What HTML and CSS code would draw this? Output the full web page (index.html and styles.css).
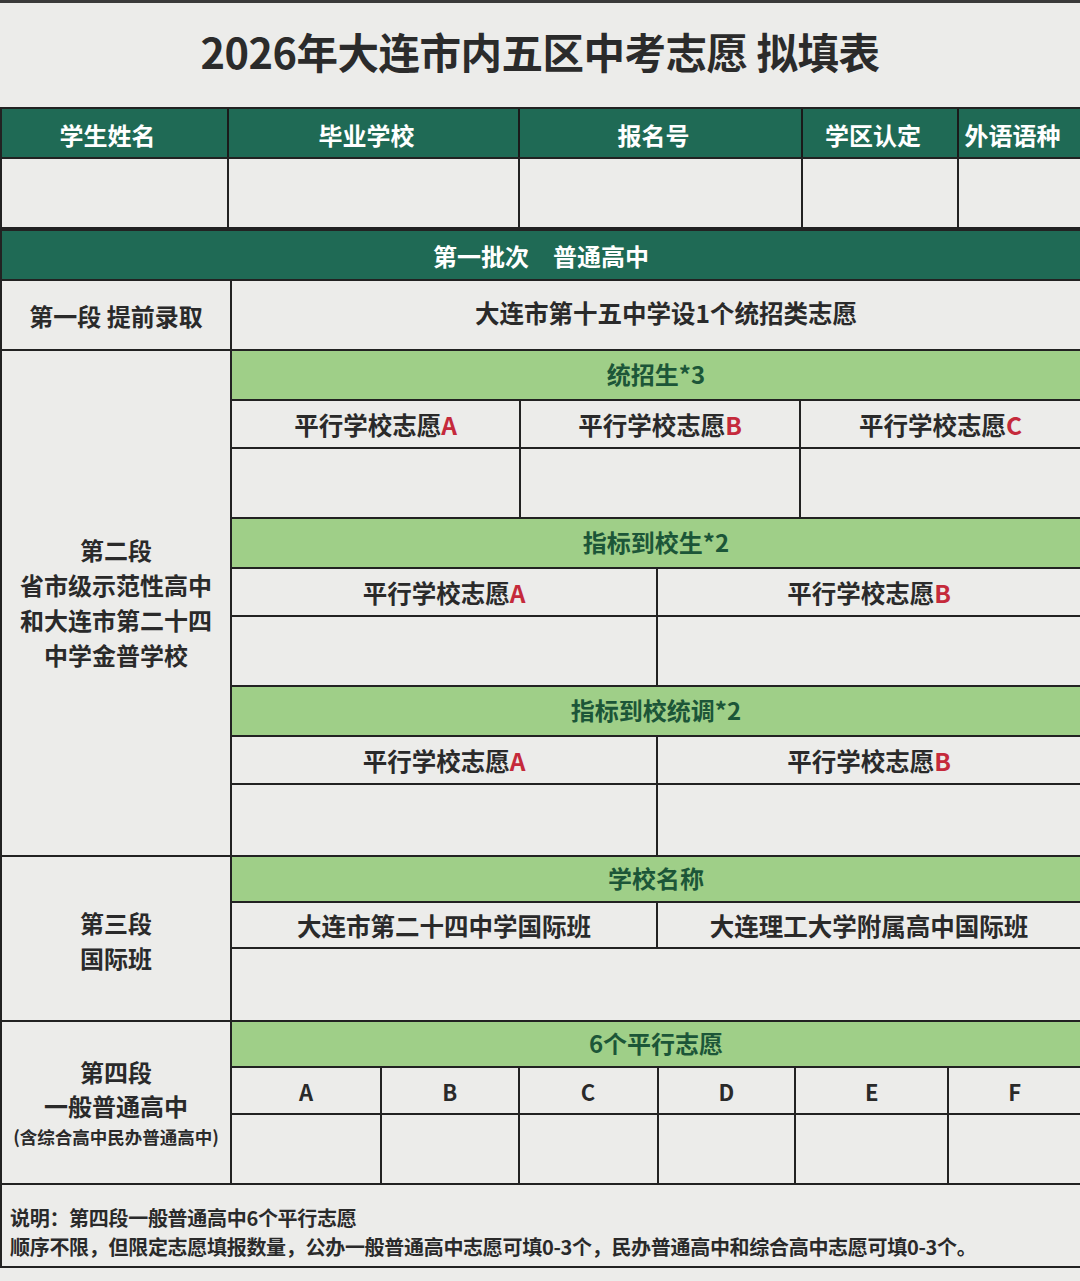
FILE: index.html
```html
<!DOCTYPE html>
<html lang="zh">
<head>
<meta charset="utf-8">
<title>2026年大连市内五区中考志愿 拟填表</title>
<link rel="stylesheet" href="styles.css">
</head>
<body>
<div class="page">
  <div class="title">2026年大连市内五区中考志愿 拟填表</div>
  <div class="form">
    <div class="row cols5 head dark">
      <div class="cell">学生姓名</div>
      <div class="cell">毕业学校</div>
      <div class="cell">报名号</div>
      <div class="cell">学区认定</div>
      <div class="cell">外语语种</div>
    </div>
    <div class="row cols5 blank">
      <div class="cell"></div>
      <div class="cell"></div>
      <div class="cell"></div>
      <div class="cell"></div>
      <div class="cell"></div>
    </div>
    <div class="row batch dark">第一批次　普通高中</div>

    <div class="seg seg1">
      <div class="label">第一段 提前录取</div>
      <div class="body one">大连市第十五中学设1个统招类志愿</div>
    </div>

    <div class="seg seg2">
      <div class="label">第二段<br>省市级示范性高中<br>和大连市第二十四<br>中学金普学校</div>
      <div class="body">
        <div class="band">统招生*3</div>
        <div class="row cols3 sub">
          <div class="cell">平行学校志愿<span class="red">A</span></div>
          <div class="cell">平行学校志愿<span class="red">B</span></div>
          <div class="cell">平行学校志愿<span class="red">C</span></div>
        </div>
        <div class="row cols3 blank">
          <div class="cell"></div><div class="cell"></div><div class="cell"></div>
        </div>
        <div class="band">指标到校生*2</div>
        <div class="row cols2 sub">
          <div class="cell">平行学校志愿<span class="red">A</span></div>
          <div class="cell">平行学校志愿<span class="red">B</span></div>
        </div>
        <div class="row cols2 blank">
          <div class="cell"></div><div class="cell"></div>
        </div>
        <div class="band">指标到校统调*2</div>
        <div class="row cols2 sub">
          <div class="cell">平行学校志愿<span class="red">A</span></div>
          <div class="cell">平行学校志愿<span class="red">B</span></div>
        </div>
        <div class="row cols2 blank last">
          <div class="cell"></div><div class="cell"></div>
        </div>
      </div>
    </div>

    <div class="seg seg3">
      <div class="label">第三段<br>国际班</div>
      <div class="body">
        <div class="band short">学校名称</div>
        <div class="row cols2 sub short">
          <div class="cell">大连市第二十四中学国际班</div>
          <div class="cell">大连理工大学附属高中国际班</div>
        </div>
        <div class="row blank wide last"></div>
      </div>
    </div>

    <div class="seg seg4">
      <div class="label">第四段<br>一般普通高中<br><span class="small">(含综合高中民办普通高中)</span></div>
      <div class="body">
        <div class="band short">6个平行志愿</div>
        <div class="row cols6 sub letters">
          <div class="cell">A</div>
          <div class="cell">B</div>
          <div class="cell">C</div>
          <div class="cell">D</div>
          <div class="cell">E</div>
          <div class="cell">F</div>
        </div>
        <div class="row cols6 blank low last">
          <div class="cell"></div><div class="cell"></div><div class="cell"></div>
          <div class="cell"></div><div class="cell"></div><div class="cell"></div>
        </div>
      </div>
    </div>

    <div class="note">
      <p>说明：第四段一般普通高中6个平行志愿</p>
      <p>顺序不限，但限定志愿填报数量，公办一般普通高中志愿可填0-3个，民办普通高中和综合高中志愿可填0-3个。</p>
    </div>
  </div>
</div>
</body>
</html>
```

FILE: styles.css
```css
* { box-sizing: border-box; }
html, body { margin: 0; padding: 0; }
body {
  background: #e4e4e2;
  font-family: "Noto Sans CJK SC", "Noto Sans", sans-serif;
  color: #2a2a2a;
}
.page {
  width: 1080px;
  height: 1281px;
  background: #ececea;
  border-top: 3px solid #3a3a3a;
  overflow: hidden;
}
.title {
  height: 104px;
  display: flex;
  align-items: center;
  justify-content: center;
  font-size: 41.5px;
  font-weight: 700;
  letter-spacing: -0.5px;
  color: #2b2b2b;
  padding-bottom: 8px;
}
.form {
  border-left: 2px solid #222;
  border-top: 2px solid #222;
}
.row {
  display: grid;
  border-bottom: 2px solid #222;
}
.cell {
  display: flex;
  align-items: center;
  justify-content: center;
  font-size: 24px;
  font-weight: 700;
  border-left: 2px solid #222;
}
.cell:first-child { border-left: none; }
.cols5 { grid-template-columns: 225px 291px 283px 156px 1fr; }
.cols3 { grid-template-columns: 287px 280px 1fr; }
.cols2 { grid-template-columns: 1fr 1fr; }
.cols6 { grid-template-columns: 147fr 137fr 138fr 137fr 152fr 132fr; }
.dark {
  background: #1f6a55;
  color: #fff;
}
.dark .cell { border-left-color: #1a1a1a; }
.head { height: 50px; }
.head .cell { color: #fff; font-size: 24px; padding-top: 2px; padding-right: 14px; }
.blank { height: 70px; }
.seg2 .blank { height: 70px; }
.blank.low { height: 68px; }
.batch {
  height: 52px;
  display: flex;
  align-items: center;
  justify-content: center;
  font-size: 24px;
  font-weight: 700;
  color: #fff;
  border-bottom: 2px solid #222;
  border-top: 2px solid #222;
}
.seg {
  display: grid;
  grid-template-columns: 230px 1fr;
  border-bottom: 2px solid #222;
}
.label {
  display: flex;
  flex-direction: column;
  align-items: center;
  justify-content: center;
  text-align: center;
  font-size: 24px;
  font-weight: 700;
  line-height: 35px;
  border-right: 2px solid #222;
}
.seg1 { height: 70px; }
.seg1 .label { font-size: 24px; }
.body {
  display: flex;
  flex-direction: column;
}
.body.one {
  align-items: center;
  justify-content: center;
  font-size: 24.5px;
  font-weight: 700;
  padding-left: 20px;
  padding-bottom: 6px;
}
.band {
  height: 50px;
  background: #9fcf88;
  color: #1c5638;
  display: flex;
  align-items: center;
  justify-content: center;
  font-size: 24px;
  font-weight: 700;
  border-bottom: 2px solid #222;
  padding-bottom: 4px;
}
.band.short { height: 46px; }
.sub { height: 48px; }
.sub.short { height: 46px; }
.sub .cell { font-size: 24.5px; }
.letters { height: 47px; }
.letters .cell { font-size: 22px; }
.red { color: #c52a3b; }
.last { border-bottom: none; }
.wide { height: 71px; }
.seg2 .label { padding-bottom: 2px; }
.seg3 .label { padding-top: 2px; }
.seg4 .label { line-height: 34px; }
.small { font-size: 17.5px; line-height: 28px; }
.note {
  height: 83px;
  padding: 18px 0 0 8px;
  font-size: 20px;
  font-weight: 700;
  border-bottom: 2px solid #222;
  letter-spacing: -0.3px;
}
.note p { margin: 0; line-height: 29px; }
```
